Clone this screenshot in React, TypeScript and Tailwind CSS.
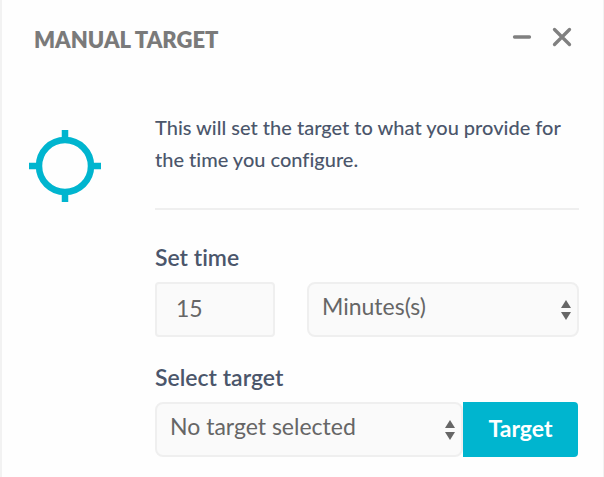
import { useState } from "react";
import type { ComponentProps } from "react";

const CrosshairIcon = () => (
  <svg viewBox="0 0 72 72" className="size-[72px]" aria-hidden="true">
    <g fill="none" stroke="#00b5cf" strokeWidth="6.5">
      <circle cx="36" cy="36" r="26" />
      <path d="M36 0v8M36 64v8M0 36h8M64 36h8" />
    </g>
  </svg>
);

interface SelectProps extends ComponentProps<"select"> {
  options: string[];
}

const Select = ({ options, ...props }: SelectProps) => {
  return (
    <div className="relative min-w-0 flex-1">
      <select
        {...props}
        className="h-[55px] w-full appearance-none rounded-lg border-2 border-[#efefef] bg-[#fafafa] pr-8 pb-[6px] pl-[13px] text-[23px] text-[#666]"
      >
        {options.map((option) => (
          <option key={option}>{option}</option>
        ))}
      </select>
      <svg
        viewBox="0 0 10 20"
        className="pointer-events-none absolute top-[18px] right-2 h-5 w-[10px]"
        aria-hidden="true"
      >
        <path d="M5 0l5 8H0zM0 12h10l-5 8z" fill="#666" />
      </svg>
    </div>
  );
};

const App = () => {
  const [time, setTime] = useState("15");

  return (
    <main className="min-h-screen border-r border-l-2 border-[#f2f2f2] bg-[#fefefe] pr-6 pl-[27px] font-['Lato',sans-serif] text-[#4b566b] [font-variant-ligatures:none]">
      <header className="flex items-center justify-between pt-6 pr-[6px] pl-[5px]">
        <h1 className="text-[22px] leading-8 font-extrabold text-[#7a7a7a]">
          MANUAL TARGET
        </h1>
        <div className="flex gap-[18px] pb-[6px] text-[#808080]">
          <button type="button" aria-label="Minimize">
            <svg viewBox="0 0 22 22" className="size-[22px]">
              <path
                d="M3.5 11h15"
                stroke="currentColor"
                strokeWidth="3.3"
                strokeLinecap="round"
              />
            </svg>
          </button>
          <button type="button" aria-label="Close">
            <svg viewBox="0 0 22 22" className="size-[22px]">
              <path
                d="M3.5 3.5l15 15M18.5 3.5l-15 15"
                stroke="currentColor"
                strokeWidth="3.3"
                strokeLinecap="round"
              />
            </svg>
          </button>
        </div>
      </header>

      <section className="flex gap-[54px] pt-[55px]">
        <div className="flex-none pt-[19px]">
          <CrosshairIcon />
        </div>

        <form
          className="min-w-0 flex-1"
          onSubmit={(e) => e.preventDefault()}
        >
          <p className="border-b-2 border-[#efefef] pb-[33px] text-[20px] leading-8 font-medium">
            This will set the target to what you provide for the time you
            configure.
          </p>

          <label
            htmlFor="time"
            className="mt-[31px] block text-[23px] leading-8 font-semibold"
          >
            Set time
          </label>
          <div className="mt-[9px] flex gap-8">
            <input
              id="time"
              type="text"
              value={time}
              onChange={(e) => setTime(e.target.value)}
              className="h-[55px] w-[120px] rounded-sm border-2 border-[#efefef] bg-[#fafafa] px-[19px] pb-[3px] text-[23px] text-[#666]"
            />
            <Select
              aria-label="Time unit"
              options={["Minutes(s)", "Hour(s)"]}
            />
          </div>

          <label
            htmlFor="target"
            className="mt-6 block text-[23px] leading-8 font-semibold"
          >
            Select target
          </label>
          <div className="mt-[9px] flex pr-px">
            <Select id="target" options={["No target selected"]} />
            <button
              type="submit"
              className="h-[55px] w-[115px] flex-none rounded-r-sm bg-[#00b5cf] pb-[2px] text-[23px] font-bold text-white"
            >
              Target
            </button>
          </div>
        </form>
      </section>
    </main>
  );
};

export default App;
